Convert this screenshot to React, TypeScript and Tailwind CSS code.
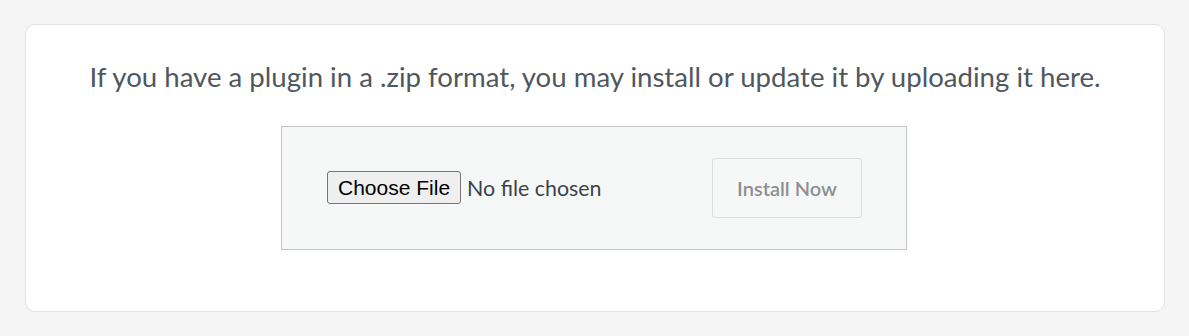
export default function App() {
  return (
    <div className="min-h-screen bg-[#f5f5f6] pl-[25px] pr-[24px] pt-[24px] font-['Lato',sans-serif]">
      <div className="flex flex-col items-center rounded-[10px] border border-[#e2e2e4] bg-white pt-[35px] pb-[61px]">
        <p className="text-[27.6px] leading-[34px] text-[#50575e]">
          If you have a plugin in a .zip format, you may install or update it by uploading it here.
        </p>

        <form className="mt-[32px] mr-[2px] flex w-[626px] items-center justify-between border border-[#c3c4c7] bg-[#f6f7f7] py-[31px] pr-[44px] pl-[45px]">
          <div className="flex items-center">
            <button
              type="button"
              className="mb-[1px] h-[33px] rounded-[3px] border border-[#767676] bg-[#efefef] px-[10px] font-['Liberation_Sans',Arial,sans-serif] text-[21px] leading-none text-black"
            >
              Choose File
            </button>
            <span className="ml-[6px] text-[21.4px] text-[#3c434a]">No file chosen</span>
          </div>

          <button
            type="button"
            disabled
            className="h-[60px] w-[150px] rounded-[3px] border border-[#dcdcde] bg-[#f6f7f7] text-[20px] font-semibold text-[#8c8f94]"
          >
            Install Now
          </button>
        </form>
      </div>
    </div>
  );
}
